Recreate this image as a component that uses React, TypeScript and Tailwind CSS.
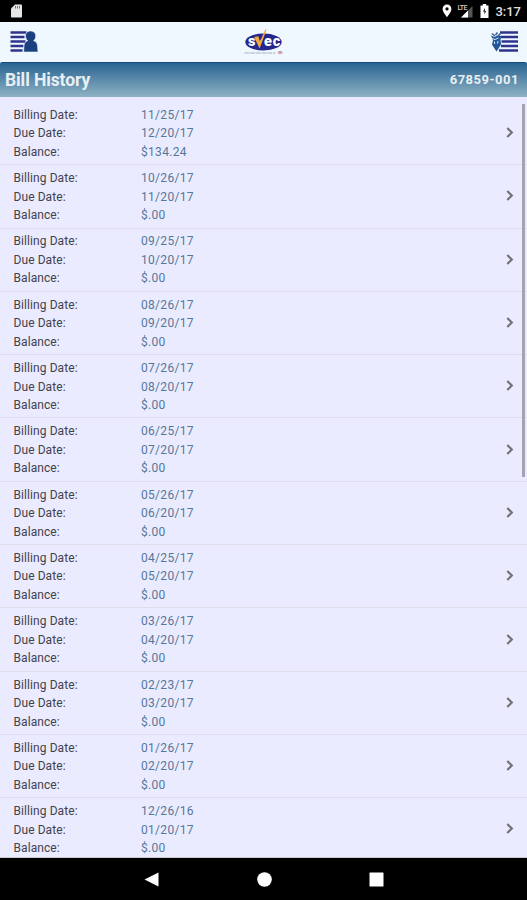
import React from 'react'

interface Bill {
  billingDate: string
  dueDate: string
  balance: string
}

const bills: Bill[] = [
  { billingDate: '11/25/17', dueDate: '12/20/17', balance: '$134.24' },
  { billingDate: '10/26/17', dueDate: '11/20/17', balance: '$.00' },
  { billingDate: '09/25/17', dueDate: '10/20/17', balance: '$.00' },
  { billingDate: '08/26/17', dueDate: '09/20/17', balance: '$.00' },
  { billingDate: '07/26/17', dueDate: '08/20/17', balance: '$.00' },
  { billingDate: '06/25/17', dueDate: '07/20/17', balance: '$.00' },
  { billingDate: '05/26/17', dueDate: '06/20/17', balance: '$.00' },
  { billingDate: '04/25/17', dueDate: '05/20/17', balance: '$.00' },
  { billingDate: '03/26/17', dueDate: '04/20/17', balance: '$.00' },
  { billingDate: '02/23/17', dueDate: '03/20/17', balance: '$.00' },
  { billingDate: '01/26/17', dueDate: '02/20/17', balance: '$.00' },
  { billingDate: '12/26/16', dueDate: '01/20/17', balance: '$.00' },
]

function StatusBar() {
  return (
    <div className="flex h-[22px] shrink-0 items-center bg-black pl-[11px] pr-[6px] text-white">
      <svg className="h-[14px] w-[11px]" viewBox="0 0 11 14">
        <path d="M4 0.5h6a1 1 0 0 1 1 1v11a1 1 0 0 1-1 1H1a1 1 0 0 1-1-1V4.5z" fill="#e6e6e6" />
        <path d="M4.5 2v2.5M6.5 2v2.5M8.5 2v2.5" stroke="#777" strokeWidth="1" />
      </svg>
      <svg className="ml-auto h-[14px] w-[10px]" viewBox="0 0 10 14">
        <path
          d="M5 0.5A4.4 4.4 0 0 0 0.6 4.9C0.6 8 5 13 5 13s4.4-5 4.4-8.1A4.4 4.4 0 0 0 5 0.5zm0 2.8a1.6 1.6 0 1 1 0 3.2 1.6 1.6 0 0 1 0-3.2z"
          fill="#fff"
        />
      </svg>
      <div className="relative ml-[5px] h-[15px] w-[16px]">
        <svg className="h-[15px] w-[16px]" viewBox="0 0 16 15">
          <path d="M15.5 2v11.5H4z" fill="#555" />
          <path d="M11 6.500v7H4z" fill="#fff" />
        </svg>
        <span className="absolute left-0 top-0 text-[7px] font-medium leading-[8px] tracking-[-0.5px] text-[#ccc]">LTE</span>
      </div>
      <svg className="ml-[7px] h-[14px] w-[9px]" viewBox="0 0 9 14">
        <path d="M2.8 0h3.4v1.4H8.5v12.6H0.5V1.4h2.3z" fill="#fff" />
        <path d="M5 4L3 7.500h1.400v3L6.200 7H5z" fill="#222" />
      </svg>
      <span className="ml-[6px] text-[13px] font-medium leading-none text-[#e0e0e0]">3:17</span>
    </div>
  )
}

function AccountIcon() {
  return (
    <svg className="h-[22px] w-[28px]" viewBox="0 0 28 22">
      <path d="M0.500 1.500h16M0.500 6h14M0.500 10.500h15M0.500 15h13M0.500 19.500h12" stroke="#30338d" strokeWidth="2.300" />
      <path
        d="M20.500 0C17 0 15.200 2.300 15.500 5.300c0.200 2 1 3.500 2.200 4.500-2.500 0.700-3.400 2.300-3.700 5L13.600 21H28l-0.500-6.200c-0.300-2.700-1.300-4.300-3.900-5 1.200-1 2-2.500 2.100-4.500C25.900 2.300 24 0 20.500 0z"
        fill="#1b4080"
        stroke="#f0f8ff"
        strokeWidth="0.600"
      />
    </svg>
  )
}

function MenuIcon() {
  return (
    <svg className="h-[22px] w-[27px]" viewBox="0 0 27 22">
      <path d="M9 1.500h18M10 6h17M10.500 10.500h16.500M10 15h17M8 19.500h19" stroke="#30338d" strokeWidth="2.300" />
      <path d="M1 2.500l3 2.500M6.500 1.500L4.500 4M10 2L7 5" stroke="#3e619d" strokeWidth="1.600" />
      <path d="M0 4.500l3.500 1.500 3-1.500 4 0.500-1 3.500 0.500 5-2.500 4-2 3-2-3-2.500-4 1-4z" fill="#24579a" />
      <path d="M1 7.500l3 1 3.500-1.500M3.500 10.500v2.500M7 10l-0.500 2.500" stroke="#edf6ff" strokeWidth="0.900" fill="none" />
    </svg>
  )
}

function Logo() {
  return (
    <svg className="h-[26px] w-[42px]" viewBox="0 0 42 26">
      <ellipse cx="20.500" cy="13" rx="18.200" ry="8.500" fill="#25278e" />
      <g fontFamily="Roboto, sans-serif" fontWeight="900" fontSize="14.500" textAnchor="middle" fill="#fff">
        <text x="8.800" y="17">s</text>
        <text x="25" y="17">e</text>
        <text x="33.500" y="17">c</text>
      </g>
      <path d="M12 8.500l4.500 9.500L23 0.500l-4.500 10-2 3-1.500-5.500z" fill="#f4aa3c" stroke="#f4aa3c" strokeWidth="1.200" />
      <path d="M1.500 24h31" stroke="#a7afc3" strokeWidth="1" strokeDasharray="5 0.700" />
      <ellipse cx="37" cy="23.800" rx="2.500" ry="1.400" fill="#d7a4b3" />
      <path d="M35.500 22.500h3l1 1.200" stroke="#8187bb" strokeWidth="0.600" fill="none" />
    </svg>
  )
}

function BillRow({ bill }: { bill: Bill }) {
  return (
    <li className="flex h-[63.3px] shrink-0 items-center border-b border-[#dedde9] pl-[13.5px] pr-[13px]">
      <dl className="grid grow grid-cols-[127.5px_1fr] pt-[1px] text-[12px] leading-[18.5px] tracking-[0.08px] text-[#42424c]">
        <dt>Billing Date:</dt>
        <dd className="tracking-[0.3px] text-[#557799]">{bill.billingDate}</dd>
        <dt>Due Date:</dt>
        <dd className="tracking-[0.3px] text-[#557799]">{bill.dueDate}</dd>
        <dt>Balance:</dt>
        <dd className="tracking-[0.3px] text-[#557799]">{bill.balance}</dd>
      </dl>
      <svg className="mb-[1px] h-[11px] w-[8px]" viewBox="0 0 8 11">
        <path d="M1.300 1l4.500 4.500-4.500 4.500" fill="none" stroke="#727277" strokeWidth="2.200" />
      </svg>
    </li>
  )
}

export default function App() {
  return (
    <div className="flex h-[900px] w-[527px] flex-col overflow-hidden bg-black font-['Roboto',sans-serif]">
      <StatusBar />

      {/* App header */}
      <header className="grid h-[40px] shrink-0 grid-cols-3 items-center bg-[#f0f8ff] pl-[10px] pr-[9px]">
        <AccountIcon />
        <div className="flex justify-center">
          <Logo />
        </div>
        <div className="flex justify-end">
          <MenuIcon />
        </div>
      </header>

      {/* Title bar */}
      <div className="bg-[#f0f8ff]">
        <div className="flex h-[35px] items-center justify-between rounded-t-[2px] border-t border-[#164b7a] bg-linear-to-b from-[#286593] to-[#8eb2c3] pl-[5px] pr-[8px] text-[#e8eff4]">
          <h1 className="text-[17.5px] font-bold tracking-[-0.1px]">Bill History</h1>
          <span className="text-[13px] font-bold tracking-[0.5px]">67859-001</span>
        </div>
      </div>

      <main className="relative h-[761px] shrink-0 overflow-hidden border-b border-[#c8c8ce] bg-[#ebebff] pt-[5px]">
        <ul>
          {bills.map((bill) => (
            <BillRow key={bill.billingDate} bill={bill} />
          ))}
        </ul>
        {/* Scroll indicator */}
        <div className="absolute right-[2px] top-[7px] h-[373px] w-[3px] bg-[#a4a4b1]" />
      </main>

      {/* Android navigation bar */}
      <nav className="flex grow items-center justify-between bg-black pl-[144px] pr-[143px]">
        <svg className="h-[15px] w-[15px]" viewBox="0 0 15 15">
          <path d="M14.500 0.500v14L0.500 7.500z" fill="#fff" />
        </svg>
        <svg className="h-[15px] w-[15px]" viewBox="0 0 15 15">
          <circle cx="7.500" cy="7.500" r="7.300" fill="#fff" />
        </svg>
        <svg className="h-[15px] w-[15px]" viewBox="0 0 15 15">
          <rect x="0.500" y="0.500" width="14" height="14" rx="0.500" fill="#fff" />
        </svg>
      </nav>
    </div>
  )
}
